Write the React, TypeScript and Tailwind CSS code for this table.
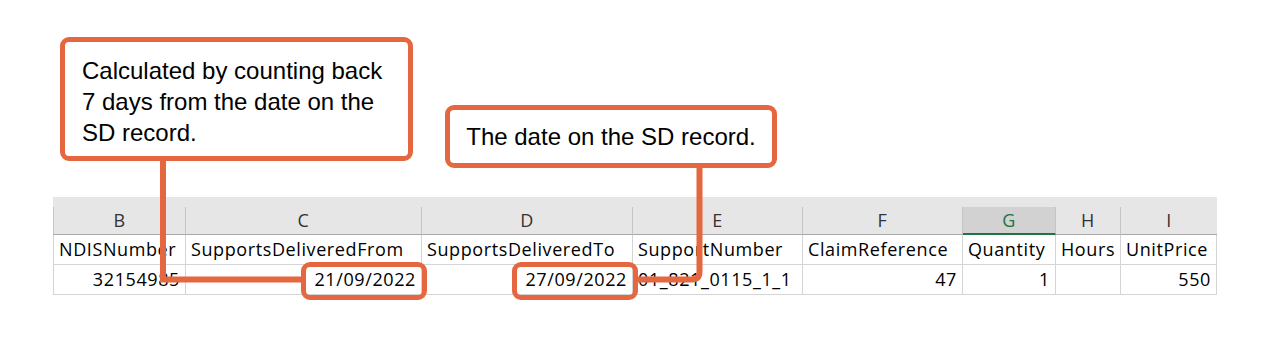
import { ReactNode } from "react";

type Column = {
  letter: string;
  width: string;
  heading: string;
  value: string;
  selected?: boolean;
};

// widths are measured off the sheet, in px
const columns: Column[] = [
  { letter: "B", width: "w-[133px]", heading: "NDISNumber", value: "32154985" },
  { letter: "C", width: "w-[236px]", heading: "SupportsDeliveredFrom", value: "21/09/2022" },
  { letter: "D", width: "w-[211px]", heading: "SupportsDeliveredTo", value: "27/09/2022" },
  { letter: "E", width: "w-[170px]", heading: "SupportNumber", value: "01_821_0115_1_1" },
  { letter: "F", width: "w-[160px]", heading: "ClaimReference", value: "47" },
  { letter: "G", width: "w-[93px]", heading: "Quantity", value: "1", selected: true },
  { letter: "H", width: "w-[65px]", heading: "Hours", value: "" },
  { letter: "I", width: "w-[96px]", heading: "UnitPrice", value: "550" },
];

const isNumber = (v: string) => /^[\d/]+$/.test(v);

const Cell = ({ first, className, children }: { first: boolean; className: string; children?: ReactNode }) => (
  <div
    className={`flex h-[30px] items-center whitespace-nowrap overflow-hidden border-b border-r border-[#d4d4d4] px-[5px] ${
      first ? "border-l" : ""
    } ${className}`}
  >
    {children}
  </div>
);

const Sheet = () => (
  <div className="ml-[53px] pt-[197px] w-[1164px] font-['Open_Sans',sans-serif] text-[18px] tracking-[0.6px] text-black">
    <div className="bg-[#e6e6e6] pt-[10px] flex">
      {columns.map((c, i) => (
        <div
          key={c.letter}
          className={`${c.width} h-[28px] flex items-center justify-center text-[18px] ${
            c.selected
              ? "bg-[#d2d2d2] border-b-2 border-[#217346] text-[#217346]"
              : "border-b border-[#a8a8a8] text-[#333]"
          } ${i < columns.length - 1 ? "border-r border-r-[#c4c4c4]" : ""} ${i === 0 ? "border-l border-l-[#c4c4c4]" : ""}`}
        >
          {c.letter}
        </div>
      ))}
    </div>
    <div className="flex">
      {columns.map((c, i) => (
        <Cell key={c.letter} first={i === 0} className={c.width}>
          {c.heading}
        </Cell>
      ))}
    </div>
    <div className="flex">
      {columns.map((c, i) => (
        <Cell
          key={c.letter}
          first={i === 0}
          className={`${c.width} ${isNumber(c.value) ? "justify-end" : "justify-start"}`}
        >
          {c.value}
        </Cell>
      ))}
    </div>
  </div>
);

export default function App() {
  return (
    <div className="relative w-[1270px] h-[340px] bg-white overflow-hidden">
      <Sheet />

      {/* connector lines, drawn over the sheet */}
      <svg className="absolute left-0 top-0 pointer-events-none" width={1270} height={340}>
        <path d="M163 158 V279.5 H304" fill="none" stroke="#e5673f" strokeWidth={6} />
        <path d="M636 279.5 H691.5 Q699.5 279.5 699.5 271.5 V166" fill="none" stroke="#e5673f" strokeWidth={6} />
      </svg>

      {/* highlighted dates */}
      <div className="absolute left-[301px] top-[262px] w-[126px] h-[38px] rounded-[9px] border-[5px] border-[#e5673f]" />
      <div className="absolute left-[512px] top-[262px] w-[126px] h-[38px] rounded-[9px] border-[5px] border-[#e5673f]" />

      {/* callouts */}
      <div className="absolute left-[60px] top-[37px] w-[353px] h-[124px] rounded-[9px] border-[5px] border-[#e5673f] bg-white pl-[17px] pt-[13px] font-['Liberation_Sans',Arial,sans-serif] text-[24px] leading-[31px] text-black">
        Calculated by counting back
        <br />7 days from the date on the
        <br />
        SD record.
      </div>
      <div className="absolute left-[445px] top-[105px] w-[332px] h-[63px] rounded-[9px] border-[5px] border-[#e5673f] bg-white flex items-center justify-center font-['Liberation_Sans',Arial,sans-serif] text-[24px] leading-[31px] text-black">
        The date on the SD record.
      </div>
    </div>
  );
}
